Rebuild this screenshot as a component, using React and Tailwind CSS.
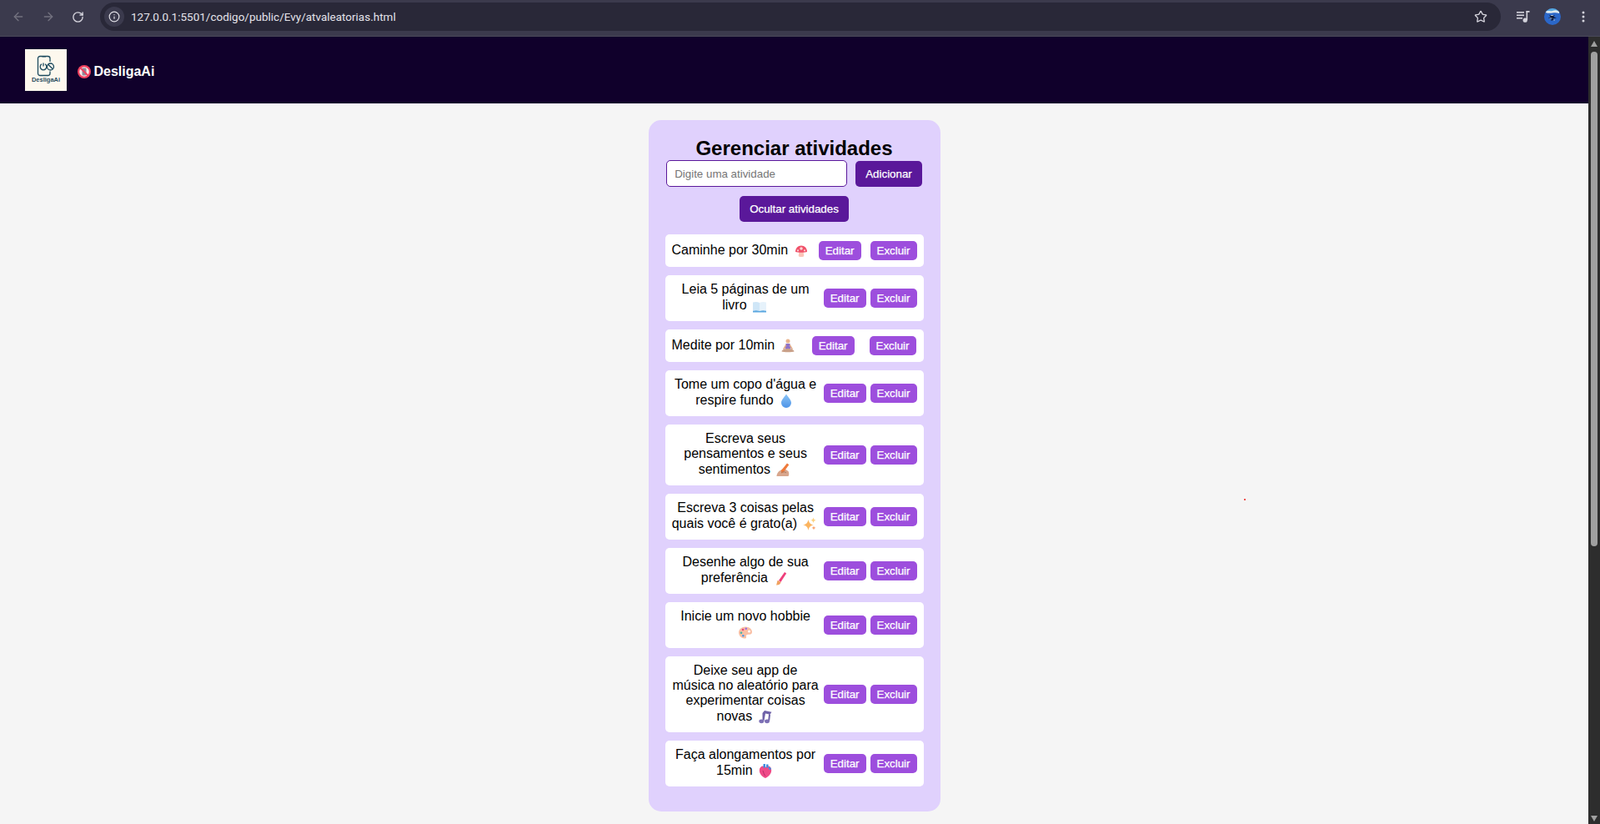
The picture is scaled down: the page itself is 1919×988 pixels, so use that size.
import React from "react";
import { ArrowLeft, ArrowRight, RotateCw, Info, Star } from "lucide-react";

const E = ({ children }) => (
  <svg viewBox="0 0 16 19" className="mx-[3px] inline-block h-[21px] w-[16px] align-[-6px]">{children}</svg>
);

const Mushroom = () => (
  <E>
    <path d="M5.500 10h5l.8 5.800c0 .8-1.500 1.200-3.300 1.200s-3.300-.4-3.300-1.200z" fill="#fbc4b8" />
    <path d="M1 11C1 6.500 4 3.500 8 3.500s7 3 7 7.500c-2 1-12 1-14 0z" fill="#f0526a" />
    <circle cx="8" cy="7" r="1.800" fill="#fbd5d5" />
    <circle cx="4" cy="9.300" r="1.100" fill="#fbd5d5" />
    <circle cx="12" cy="9.300" r="1.100" fill="#fbd5d5" />
  </E>
);
const Book = () => (
  <E>
    <path d="M0 5.500c2.800-.8 5.500-.8 8 .5v10c-2.500-1-5.200-1-8-.3z" fill="#cfe6f7" />
    <path d="M16 5.500c-2.800-.8-5.500-.8-8 .5v10c2.500-1 5.200-1 8-.3z" fill="#e6f2fb" />
    <path d="M0 15.700c2.800-.7 5.500-.7 8 .3 2.500-1 5.200-1 8-.3V17.500H0z" fill="#5aa7e0" />
  </E>
);
const Meditate = () => (
  <E>
    <circle cx="8" cy="4" r="2.500" fill="#e9b48f" />
    <path d="M5.500 7h5l1 6.500h-7z" fill="#8f73c9" />
    <path d="M5.500 7.500 2 13.500l1.500.7L6 10zM10.500 7.500l3.500 6-1.500.7L10 10z" fill="#e0ac8b" />
    <path d="M0.500 16.500c0-2.200 4.500-3.500 7.500-3.500s7.500 1.300 7.500 3.500c-2 1-13 1-15 0z" fill="#c9a088" />
  </E>
);
const Drop = () => (
  <E>
    <defs>
      <linearGradient id="drop" x1="0" x2="0" y1="0" y2="1">
        <stop offset="0" stopColor="#8cc4f5" />
        <stop offset="1" stopColor="#4d94e8" />
      </linearGradient>
    </defs>
    <path d="M8 1.500c2.500 4 6 7 6 10.500a6 6 0 0 1-12 0C2 8.500 5.500 5.500 8 1.500z" fill="url(#drop)" />
  </E>
);
const Writing = () => (
  <E>
    <path d="M0.500 17c0-3.500 3-7 6.500-8l3-1 4.500 3c1 2 1.200 4.500 0 6z" fill="#d8a68d" />
    <path d="m6 10 7-8.500 2.300 1.700L8.500 12.500 6 13.500z" fill="#ef7a3b" />
    <path d="M6 12.500c2-1 4-1 6 .3" stroke="#a87a62" strokeWidth="1" fill="none" />
  </E>
);
const Sparkles = () => (
  <E>
    <path d="M6.500 4c.9 4 2.300 5.600 6.500 6.500-4.200.9-5.600 2.300-6.500 6.500-.9-4.200-2.300-5.600-6.500-6.500C4.200 9.600 5.600 8 6.500 4z" fill="#fbb45f" />
    <path d="M12.500 1.500c.5 2.100 1.200 2.900 3.300 3.300-2.100.5-2.800 1.200-3.300 3.300-.5-2.100-1.200-2.800-3.300-3.300 2.100-.4 2.800-1.200 3.300-3.300z" fill="#fcd27f" />
    <path d="M13 11.500c.4 1.500.9 2 2.500 2.500-1.600.4-2.100.9-2.500 2.500-.4-1.600-.9-2.100-2.500-2.500 1.600-.5 2.100-1 2.500-2.500z" fill="#f9a06b" />
  </E>
);
const Brush = () => (
  <E>
    <path d="m6 12 7-10 2.200 1.500L8.400 14z" fill="#ee3f7b" />
    <path d="m4.800 11.800 3.800 2.500c-.6 2.200-2.800 3.400-5.600 3.200.9-1.300.7-4 1.800-5.700z" fill="#f0a15f" />
  </E>
);
const Palette = () => (
  <E>
    <path d="M8 2.500c-4.300 0-8 3-8 7 0 3.800 3.300 7 7 7 1.700 0 2.300-.9 2-2.200-.3-1.600.6-2.500 2.200-2.500h1.800c1.800 0 3-1.200 3-3 0-3.500-3.500-6.300-8-6.300z" fill="#f9bfa4" />
    <circle cx="5" cy="6" r="1.300" fill="#e8467c" />
    <circle cx="8.800" cy="4.800" r="1.300" fill="#9a6ee0" />
    <circle cx="3" cy="9.800" r="1.300" fill="#49b5a5" />
    <circle cx="5.300" cy="13.300" r="1.300" fill="#4c9be8" />
    <circle cx="12.500" cy="8" r="1.500" fill="#fff" />
  </E>
);
const Notes = () => (
  <E>
    <path d="M4.500 5 7 2l8.500 1.800-2 3-5.500-1.200L6.500 14h-2zM12 6.500l2 .4-.8 7.100h-2z" fill="#6f62a8" />
    <ellipse cx="3.300" cy="14.800" rx="3" ry="2.400" fill="#7d70b5" />
    <ellipse cx="10" cy="14.800" rx="3" ry="2.400" fill="#7d70b5" />
  </E>
);
const Heart = () => (
  <E>
    <path d="M8 18C3.500 16 .8 12.500 .8 8.500c0-3 2-5 4.500-5 1.200 0 2.200.5 2.700 1.500.8-1 1.700-1.500 3.200-1.500 2.500 0 4 2 4 5 0 4-3 7.500-7.200 9.500z" fill="#ef4a87" />
    <path d="M5.500 1h2.500v4.500H5.500zM9 1.500h2.500V5.500H9z" fill="#3f8fe0" />
    <path d="M12 4.500c1.500 0 3 1.300 3 3l-3 .3z" fill="#3f8fe0" />
    <path d="M5 9c1 2.500 1 4.500 3 6.500" stroke="#b72c68" strokeWidth="1" fill="none" />
  </E>
);
const NoPhone = () => (
  <svg viewBox="0 0 16 16" className="-mr-[1px] inline-block h-[16px] w-[16px] align-[-3px]">
    <circle cx="8" cy="8" r="8" fill="#f0415f" />
    <circle cx="8" cy="8" r="5.800" fill="#fbe9ea" />
    <rect x="5.500" y="3.500" width="5" height="9" rx="1" fill="#8b8b98" />
    <path d="m3.800 3.800 8.400 8.400" stroke="#f0415f" strokeWidth="2" />
  </svg>
);

const rows = [
  { t: "Caminhe por 30min", e: <Mushroom />, left: true, ed: "ml-[5px]", ex: "ml-[11px]" },
  { t: "Leia 5 páginas de um livro", e: <Book /> },
  { t: "Medite por 10min", e: <Meditate />, left: true, ed: "ml-[5px]", ex: "ml-[18px] mr-[1px]" },
  { t: "Tome um copo d'água e respire fundo", e: <Drop /> },
  { t: "Escreva seus pensamentos e seus sentimentos", e: <Writing /> },
  { t: "Escreva 3 coisas pelas quais você é grato(a)", e: <Sparkles /> },
  { t: "Desenhe algo de sua preferência", e: <Brush /> },
  { t: "Inicie um novo hobbie", e: <Palette /> },
  { t: "Deixe seu app de música no aleatório para experimentar coisas novas", e: <Notes /> },
  { t: "Faça alongamentos por 15min", e: <Heart /> },
];

const smallBtn = "h-[23px] shrink-0 rounded-[5px] bg-[#9d4edd] px-[8px] text-[13.33px] leading-[15px] text-white [-webkit-text-stroke:0.25px_white]";
const bigBtn = "h-[31px] shrink-0 rounded-[5px] bg-[#5a189a] px-[12px] text-[13.33px] leading-[15px] text-white [-webkit-text-stroke:0.25px_white]";

function Row({ r }) {
  return (
    <li className="flex items-center rounded-[5px] bg-white p-[8px] text-[16px] leading-[18px] text-black">
      <span className={`min-w-0 flex-1 ${r.left ? "text-left" : "text-center"}`}>
        {r.t} {r.e}
      </span>
      <button className={`${smallBtn} ${r.ed || "ml-[5px]"}`}>Editar</button>
      <button className={`${smallBtn} ${r.ex || "ml-[5px]"}`}>Excluir</button>
    </li>
  );
}

function Chrome() {
  return (
    <div className="flex h-[44px] shrink-0 items-start border-b border-[#4a4959] bg-[#3b3a4d] pt-[3px]">
      <div className="flex h-[34px] w-[120px] shrink-0 items-center pl-[14px]">
        <ArrowLeft size={16} strokeWidth={2} className="text-[#73727f]" />
        <ArrowRight size={16} strokeWidth={2} className="ml-[20px] text-[#73727f]" />
        <RotateCw size={15} strokeWidth={2.2} className="ml-[20px] text-[#d4d3dc]" />
      </div>
      <div className="flex h-[34px] w-[1680px] shrink-0 items-center rounded-full bg-[#292838] pl-[5px] pr-[16px]">
        <div className="flex h-[24px] w-[24px] items-center justify-center rounded-full bg-[#3b3a4d]">
          <Info size={14} strokeWidth={2} className="text-[#e3e2e9]" />
        </div>
        <span className="ml-[8px] font-['Roboto',sans-serif] text-[13.5px] text-[#e3e2e9]">
          127.0.0.1:5501/codigo/public/Evy/atvaleatorias.html
        </span>
        <Star size={16} strokeWidth={2} className="ml-auto text-[#d4d3dc]" />
      </div>
      <div className="flex h-[34px] flex-1 items-center pl-[19px]">
        <svg viewBox="0 0 16 14" className="h-[14px] w-[16px] text-[#d4d3dc]" fill="currentColor">
          <rect x="0" y="1" width="9" height="1.600" />
          <rect x="0" y="4.500" width="9" height="1.600" />
          <rect x="0" y="8" width="7" height="1.600" />
          <rect x="11.500" y="0" width="1.600" height="11" />
          <rect x="11.500" y="0" width="4" height="1.800" />
          <circle cx="10.200" cy="11.200" r="2.600" />
        </svg>
        <svg viewBox="0 0 20 20" className="ml-[17px] h-[20px] w-[20px]">
          <defs>
            <clipPath id="av"><circle cx="10" cy="10" r="10" /></clipPath>
          </defs>
          <g clipPath="url(#av)">
            <rect width="20" height="20" fill="#2b67c9" />
            <rect width="20" height="5" fill="#5aa9de" />
            <path d="M2 4c3-2 5 0 8-1s5-1 8 1v2c-3-1-5-1-8-.5S4 6 2 5z" fill="#dfe9ee" />
            <path d="M6 8.500h7l-2 1.500 4 1.500-5 .8 3 1.500-5 1 .8-2-4-1.200 3-1.200z" fill="#0e1a3a" />
            <path d="M8 8.500h3M6.500 12h3M11 14h2" stroke="#dfe9ee" strokeWidth=".7" />
          </g>
        </svg>
        <svg viewBox="0 0 4 14" className="ml-[25px] h-[14px] w-[4px] fill-[#d4d3dc]">
          <circle cx="2" cy="2" r="1.500" />
          <circle cx="2" cy="7" r="1.500" />
          <circle cx="2" cy="12" r="1.500" />
        </svg>
      </div>
    </div>
  );
}

function Scrollbar() {
  return (
    <div className="flex w-[14px] shrink-0 flex-col items-center bg-[#2d2d2d] pt-[5px] pb-[3px]">
      <svg viewBox="0 0 8 7" className="h-[7px] w-[8px] fill-[#a0a0a0]"><path d="M4 0l4 7H0z" /></svg>
      <div className="mt-[6px] h-[593px] w-[8px] rounded-[4px] bg-[#a0a0a0]" />
      <svg viewBox="0 0 8 7" className="mt-auto h-[7px] w-[8px] fill-[#a0a0a0]"><path d="M4 7l4-7H0z" /></svg>
    </div>
  );
}

export default function App() {
  return (
    <div className="flex h-[988px] flex-col overflow-hidden bg-[#f5f5f5] font-['Liberation_Sans',Arial,sans-serif]">
      <Chrome />
      <div className="flex min-h-0 flex-1">
        <main className="relative min-w-0 flex-1">
          <header className="flex h-[80px] items-center bg-[#10002b] pl-[30px] text-white">
            <div className="flex h-[50px] w-[50px] shrink-0 flex-col items-center bg-[#fdf8ee] pt-[7px]">
              <svg viewBox="0 0 24 26" className="h-[26px] w-[24px]" fill="none" stroke="#1d4a5e" strokeWidth="1.300">
                <path d="M17 19.500V22a2.500 2.500 0 0 1-2.500 2.500H5A2.500 2.500 0 0 1 2.500 22V4A2.500 2.500 0 0 1 5 1.500h9.500A2.500 2.500 0 0 1 17 4v4" />
                <path d="M7.500 1.800h4.500" />
                <path d="M7 10.800a3.800 3.800 0 1 0 4 0" />
                <path d="M9 9.500v4" />
                <circle cx="17.500" cy="14" r="4" />
                <path d="m14.700 11.200 5.600 5.600" />
              </svg>
              <span className="text-[7.500px] font-bold leading-[8px] text-[#2a4d5e]">DesligaAi</span>
            </div>
            <span className="ml-[13px] pt-[4px] text-[16px] font-bold">
              <NoPhone /> DesligaAi
            </span>
          </header>
          <section className="mx-auto mt-[20px] w-[350px] rounded-[15px] bg-[#e0d1fd] px-[20px] pt-[20px] pb-[30px]">
            <h1 className="text-center text-[24px] font-bold leading-[28px] text-black">Gerenciar atividades</h1>
            <div className="flex items-center justify-center gap-[10px]">
              <input
                placeholder="Digite uma atividade"
                className="h-[32px] w-[217px] rounded-[5px] border border-[#5a189a] bg-white px-[9px] text-[13.33px] outline-none placeholder:text-[#757575]"
              />
              <button className={bigBtn}>Adicionar</button>
            </div>
            <div className="mt-[11px] flex justify-center">
              <button className={bigBtn}>Ocultar atividades</button>
            </div>
            <ul className="mt-[15px] flex flex-col gap-[10px]">
              {rows.map((r) => (
                <Row key={r.t} r={r} />
              ))}
            </ul>
          </section>
          <div className="absolute left-[1492px] top-[554px] h-[2px] w-[2px] bg-[#ef5350]" />
        </main>
        <Scrollbar />
      </div>
    </div>
  );
}
